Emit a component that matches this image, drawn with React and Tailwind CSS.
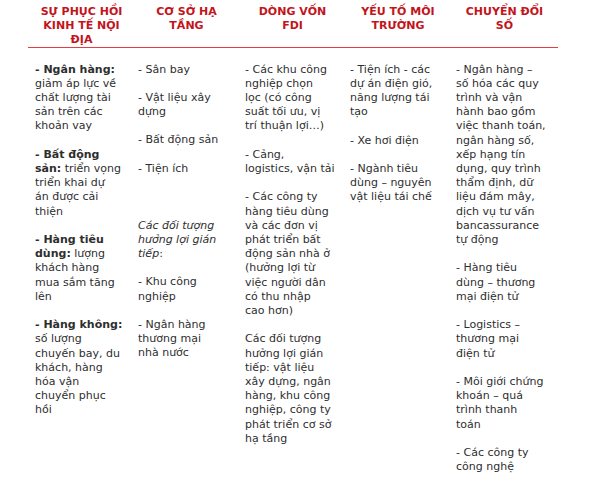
import React from "react";

const B = ({ children }) => <span className="font-bold">{children}</span>;
const I = ({ children }) => <span className="italic">{children}</span>;

function Para({ lines, className = "" }) {
  return (
    <p className={"mb-[14.2px] " + className}>
      {lines.map((l, i) => (
        <React.Fragment key={i}>
          {l}
          {i < lines.length - 1 && <br />}
        </React.Fragment>
      ))}
    </p>
  );
}

const headers = [
  ["SỰ PHỤC HỒI", "KINH TẾ NỘI", "ĐỊA"],
  ["CƠ SỞ HẠ", "TẦNG"],
  ["DÒNG VỐN", "FDI"],
  ["YẾU TỐ MÔI", "TRƯỜNG"],
  ["CHUYỂN ĐỔI", "SỐ"],
];

const cols = [
  [
    { lines: [<B>- Ngân hàng:</B>, "giảm áp lực về", "chất lượng tài", "sản trên các", "khoản vay"] },
    { lines: [<B>- Bất động</B>, <><B>sản:</B> triển vọng</>, "triển khai dự", "án được cải", "thiện"] },
    { lines: [<B>- Hàng tiêu</B>, <><B>dùng:</B> lượng</>, "khách hàng", "mua sắm tăng", "lên"] },
    { lines: [<B>- Hàng không:</B>, "số lượng", "chuyến bay, du", "khách, hàng", "hóa vận", "chuyển phục", "hồi"] },
  ],
  [
    { lines: ["- Sân bay"] },
    { lines: ["- Vật liệu xây", "dựng"] },
    { lines: ["- Bất động sản"] },
    { lines: ["- Tiện ích"], cls: "mb-[42.6px]" },
    { lines: [<I>Các đối tượng</I>, <I>hưởng lợi gián</I>, <><I>tiếp</I>:</>] },
    { lines: ["- Khu công", "nghiệp"] },
    { lines: ["- Ngân hàng", "thương mại", "nhà nước"] },
  ],
  [
    { lines: ["- Các khu công", "nghiệp chọn", "lọc (có công", "suất tối ưu, vị", "trí thuận lợi…)"] },
    { lines: ["- Cảng,", "logistics, vận tải"] },
    { lines: ["- Các công ty", "hàng tiêu dùng", "và các đơn vị", "phát triển bất", "động sản nhà ở", "(hưởng lợi từ", "việc người dân", "có thu nhập", "cao hơn)"] },
    { lines: ["Các đối tượng", "hưởng lợi gián", "tiếp: vật liệu", "xây dựng, ngân", "hàng, khu công", "nghiệp, công ty", "phát triển cơ sở", "hạ tầng"] },
  ],
  [
    { lines: ["- Tiện ích - các", "dự án điện gió,", "năng lượng tái", "tạo"] },
    { lines: ["- Xe hơi điện"] },
    { lines: ["- Ngành tiêu", "dùng – nguyên", "vật liệu tái chế"] },
  ],
  [
    { lines: ["- Ngân hàng –", "số hóa các quy", "trình và vận", "hành bao gồm", "việc thanh toán,", "ngân hàng số,", "xếp hạng tín", "dụng, quy trình", "thẩm định, dữ", "liệu đám mây,", "dịch vụ tư vấn", "bancassurance", "tự động"] },
    { lines: ["- Hàng tiêu", "dùng – thương", "mại điện tử"] },
    { lines: ["- Logistics –", "thương mại", "điện tử"] },
    { lines: ["- Môi giới chứng", "khoán – quá", "trình thanh", "toán"] },
    { lines: ["- Các công ty", "công nghệ"] },
  ],
];

export default function App() {
  return (
    <div
      className="w-[600px] h-[497px] bg-white overflow-hidden pl-[28px]"
      style={{ fontFamily: '"DejaVu Sans", "Open Sans", sans-serif' }}
    >
      <div className="w-[530px] border-b-[1.5px] border-[#e2403f] pt-[5px]">
        <div className="grid grid-cols-[103px_107px_105px_106px_107px] pl-[2px]">
          {headers.map((h, i) => (
            <div key={i} className="text-center text-[11px] leading-[14px] font-bold text-[#c3141c]">
              {h.map((l, j) => (
                <div key={j}>{l}</div>
              ))}
            </div>
          ))}
        </div>
      </div>
      <div className="grid grid-cols-[103px_107px_105px_106px_107px] pl-[2px] pt-[14.5px] text-[11px] leading-[14.2px] text-[#2e2e2e]">
        {cols.map((c, i) => (
          <div key={i} className="whitespace-nowrap pl-[5px]">
            {c.map((p, j) => (
              <Para key={j} lines={p.lines} className={p.cls || ""} />
            ))}
          </div>
        ))}
      </div>
    </div>
  );
}
